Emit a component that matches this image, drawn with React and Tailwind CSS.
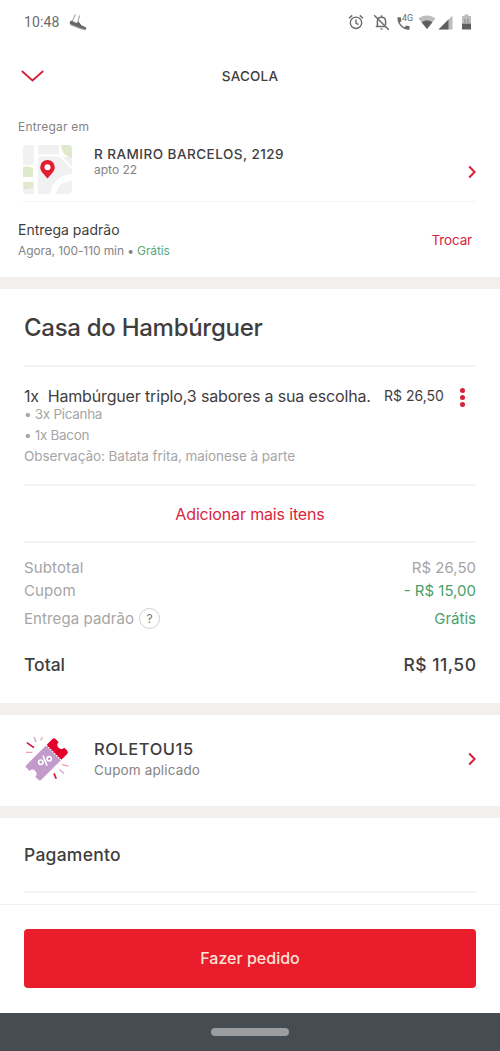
import React from 'react';

const ITEM_DETAILS = ['• 3x Picanha', '• 1x Bacon'];

const StatusBar = () => (
    <div className="flex h-11 items-center justify-between pl-[24px] pr-[28px] text-[#6b6b6b]">
        <div className="flex items-center gap-[10px]">
            <span className="font-[Roboto] text-[14px] leading-4 tracking-[0.1px]">10:48</span>
            <svg width="18" height="18" viewBox="0 0 18 18">
                <path d="M0.6 9.2L2.2 7.4L7.5 10L9.6 8.4L12.4 12.2L17.2 14.6L17 16.6L11.8 15.6L1.2 11.2Z" fill="#666" />
                <path d="M1.2 11.4L11.8 15.8L17 16.8" fill="none" stroke="#999" strokeWidth="1.1" />
                <path d="M3.4 8L6.4 1.2M8.8 9L10.6 2.4" fill="none" stroke="#999" strokeWidth="1" />
            </svg>
        </div>
        <div className="flex items-center">
            <svg width="16" height="16" viewBox="0 0 16 16" fill="none" stroke="currentColor" strokeWidth="1.4">
                <circle cx="8" cy="8.8" r="5.7" />
                <path d="M8 5.6V9.2L10.4 10.7M1 4.2L4.2 1.4M15 4.2L11.8 1.4" />
            </svg>
            <svg className="ml-[9px]" width="17" height="17" viewBox="0 0 17 17" fill="none" stroke="currentColor" strokeWidth="1.5">
                <path d="M4.4 12.2V7.4C4.4 4.8 6 3.2 8.5 3.2S12.6 4.8 12.6 7.4V11M2.8 12.6H12.6M8.5 1.2V3" />
                <path d="M1.2 1.2L15.8 15.8" />
                <path d="M7.2 14.4H9.8A1.3 1.3 0 0 1 7.2 14.4Z" fill="currentColor" stroke="none" />
            </svg>
            <div className="relative ml-[7px] h-[17px] w-[17px]">
                <svg width="17" height="17" viewBox="0 0 17 17" fill="currentColor">
                    <path d="M0.5 3.2H3.8L4.5 7L2.8 8.6C4 11 5.7 12.5 7.6 13.3L9.3 11.5L12.6 12.3V15.6C6 16.2 0 10.6 0.5 3.2Z" />
                </svg>
                <span className="absolute left-[5px] top-0 font-[Roboto] text-[9px] leading-[9px]">4G</span>
            </div>
            <svg className="ml-[4px]" width="18" height="15" viewBox="0 0 18 15">
                <path d="M0.5 3.5C5.5 -0.6 12.5 -0.6 17.5 3.5L9 14Z" fill="#bdbdbd" />
                <path d="M3.6 7.3C6.8 4.9 11.2 4.9 14.4 7.3L9 14Z" fill="#5f5f5f" />
            </svg>
            <svg className="ml-[2px]" width="15" height="15" viewBox="0 0 15 15">
                <path d="M14.5 0.5V14.5H0.5Z" fill="#bdbdbd" />
                <path d="M10.5 4.5V14.5H0.5Z" fill="#5f5f5f" />
            </svg>
            <svg className="ml-[8px]" width="11" height="16" viewBox="0 0 11 16">
                <path d="M3.5 0.5H7.5V2H10V9.5H1V2H3.5Z" fill="#bdbdbd" />
                <path d="M1 9.5H10V15.5H1Z" fill="#5f5f5f" />
                <path d="M4 5V9M7 5V9" stroke="#888" strokeWidth="1" />
            </svg>
        </div>
    </div>
);

const MapThumb = () => (
    <svg width="49" height="49" viewBox="0 0 49 49">
        <g fill="#f1f1f2">
            <path d="M4 0H11V20H0V4Q0 0 4 0Z" />
            <path d="M15 0H36V12H49V29C36 30 29 37 27 49H15V36H15Z" />
            <path d="M33 49C34 41 40 36 49 36V45Q49 49 45 49Z" />
            <path d="M0 37H11V49H4Q0 49 0 45Z" />
        </g>
        <path d="M15 10.5H37L49 23" fill="none" stroke="#fff" strokeWidth="2" />
        <g fill="#e0e9cb">
            <path d="M38 0H45Q49 0 49 4V13C43 12 38 7 38 0Z" />
            <path d="M0 22Q5 20 10 23V32H0Z" />
            <path d="M0 37H10V42Q7 45 1 44Z" />
        </g>
        <path d="M24.5 33.5C21 29 17.2 26.3 17.2 22.2A7.3 7.3 0 0 1 31.8 22.2C31.8 26.3 28 29 24.5 33.5Z" fill="#e11d2e" />
        <circle cx="24.5" cy="22.3" r="3" fill="#fff" />
    </svg>
);

const CouponIcon = () => (
    <svg width="46" height="46" viewBox="0 0 46 46">
        <g transform="translate(23.3 23) rotate(-45)">
            <path d="M-19 -10.5H9V10.5H-19Q-21 10.5 -21 8.5V4A4 4 0 0 0 -21 -4V-8.5Q-21 -10.5 -19 -10.5Z" fill="#c39bcb" />
            <path d="M9 -10.5H17.5Q20 -10.5 20 -8V-4A4 4 0 0 0 20 4V8Q20 10.5 17.5 10.5H9Z" fill="#e4002b" />
            <path d="M9 -10.5V10.5" stroke="#fff" strokeWidth="1.3" strokeDasharray="1.5 1.3" />
        </g>
        <g fill="none" stroke="#fff" strokeWidth="1.6">
            <circle cx="16.8" cy="26.2" r="2.2" />
            <circle cx="25.2" cy="22.8" r="2.2" />
            <path d="M18.9 19.6L23.1 29.6" />
        </g>
        <g fill="none" strokeWidth="1.7">
            <path d="M2.8 6.6L10 11.6M30 37.4L32.2 42.8" stroke="#cf1738" />
            <path d="M10.2 1L12 6.2M35.4 33.6L40 37.4" stroke="#d5b5da" />
            <path d="M18.4 1L16.8 4.4M2 16.4H8.4M38 28.6L44.5 30.2" stroke="#f3a1a5" strokeWidth="1.3" />
        </g>
    </svg>
);

const Chevron = () => (
    <svg width="8" height="14" viewBox="0 0 8 14" fill="none" stroke="#d6213a" strokeWidth="2">
        <path d="M1.2 1.5L6.6 7L1.2 12.5" />
    </svg>
);

const Band = () => <div className="h-3 bg-[#f3efec]" />;

const Line = () => <div className="h-[2px] bg-[#f4f3f3]" />;

const App = () => {
    return (
        <div className="flex h-[1051px] w-[500px] flex-col overflow-hidden bg-white font-[Inter,sans-serif] text-[#3f3e3e]">
            <StatusBar />
            <header className="grid h-16 grid-cols-[1fr_auto_1fr] items-center px-[21px]">
                <svg width="23" height="12" viewBox="0 0 23 12" fill="none" stroke="#d6213a" strokeWidth="1.8">
                    <path d="M0.8 1L11.5 10.5L22.2 1" />
                </svg>
                <h1 className="text-[13.5px] font-medium leading-4 tracking-[0.2px]">SACOLA</h1>
            </header>

            <section className="h-[169px] pl-[18px] pr-6 pt-[11px]">
                <p className="text-[12px] leading-4 tracking-[0.2px] text-[#858484]">Entregar em</p>
                <div className="ml-[5px] mt-[10px] flex h-[57px] border-b border-[#f4f4f4]">
                    <MapThumb />
                    <div className="ml-[22px] flex-1">
                        <p className="mt-px text-[13.5px] font-medium leading-4 tracking-[0.47px]">R RAMIRO BARCELOS, 2129</p>
                        <p className="text-[12px] leading-4 text-[#858484]">apto 22</p>
                    </div>
                    <div className="mt-5"><Chevron /></div>
                </div>
                <div className="mt-[18px] flex items-start justify-between pr-1">
                    <div>
                        <p className="text-[14px] leading-5">Entrega padrão</p>
                        <p className="mt-px text-[12px] leading-5 tracking-[-0.1px] text-[#858484]">
                            Agora, 100-110 min • <span className="text-[#58a87b]">Grátis</span>
                        </p>
                    </div>
                    <button className="mt-[10px] text-[13.5px] leading-5 tracking-[-0.15px] text-[#d92540]">Trocar</button>
                </div>
            </section>
            <Band />

            <section className="h-[414px] px-6 pt-[23px]">
                <h2 className="mb-[21px] text-[24px] font-medium leading-8 tracking-[-0.28px]">Casa do Hambúrguer</h2>
                <Line />
                <div className="flex h-[117px] flex-col pt-[19px]">
                    <div className="flex h-5 items-center">
                        <p className="w-[360px] whitespace-pre text-[16px] leading-5 tracking-[-0.15px]">1x  Hambúrguer triplo,3 sabores a sua escolha.</p>
                        <span className="text-[14px] leading-5">R$ 26,50</span>
                        <div className="ml-auto mr-[11px] mt-[3px] flex flex-col gap-[2px]">
                            <i className="h-[5px] w-[5px] rounded-full bg-[#d6213a]" />
                            <i className="h-[5px] w-[5px] rounded-full bg-[#d6213a]" />
                            <i className="h-[5px] w-[5px] rounded-full bg-[#d6213a]" />
                        </div>
                    </div>
                    <div className="-mt-[2px] text-[13.5px] leading-[21px] tracking-[-0.05px] text-[#a6a5a5]">
                        {ITEM_DETAILS.map(d => <p key={d} className="tracking-[-0.3px]">{d}</p>)}
                        <p>Observação: Batata frita, maionese à parte</p>
                    </div>
                </div>
                <Line />
                <button className="flex h-[55px] w-full items-center justify-center text-[16px] tracking-[-0.15px] text-[#d92540]">Adicionar mais itens</button>
                <Line />
                <div className="mt-[13px] text-[15px] leading-[23px] text-[#a6a5a5]">
                    <div className="flex justify-between"><span className="tracking-[0.12px]">Subtotal</span><span>R$ 26,50</span></div>
                    <div className="flex justify-between"><span className="tracking-[0.12px]">Cupom</span><span className="text-[#489f6b]">- R$ 15,00</span></div>
                    <div className="mt-[5px] flex justify-between">
                        <div className="flex items-center gap-[5px]">
                            <span className="tracking-[0.1px]">Entrega padrão</span>
                            <span className="flex h-[21px] w-[21px] items-center justify-center rounded-full border border-[#cfcfcf] text-[12px] leading-none text-[#777]">?</span>
                        </div>
                        <span className="text-[#489f6b]">Grátis</span>
                    </div>
                </div>
                <div className="mt-[23px] flex justify-between text-[17.5px] font-medium leading-6">
                    <span>Total</span>
                    <span className="tracking-[0.5px] -mr-[0.5px]">R$ 11,50</span>
                </div>
            </section>
            <Band />

            <section className="flex h-[91px] items-center px-6 pb-1">
                <CouponIcon />
                <div className="ml-[24px] flex-1">
                    <p className="text-[16.5px] font-medium leading-[22px] tracking-[0.55px]">ROLETOU15</p>
                    <p className="text-[13.5px] leading-5 tracking-[0.15px] text-[#858484]">Cupom aplicado</p>
                </div>
                <Chevron />
            </section>
            <Band />

            <section className="h-[86px] px-6 pt-[25px]">
                <h3 className="mb-[24px] text-[17.5px] font-medium leading-6 tracking-[0.25px]">Pagamento</h3>
                <Line />
            </section>

            <footer className="h-[109px] border-t border-[#efefef] px-6 pt-6">
                <button className="h-[59px] w-full rounded-[4px] bg-[#ea1d2c] pb-[2px] text-[16px] font-medium text-[#fbe3d8]">Fazer pedido</button>
            </footer>
            <div className="flex h-[38px] items-center justify-center bg-[#454d52]">
                <div className="h-[8px] w-[78px] rounded-full bg-[#9a9ea0]" />
            </div>
        </div>
    );
};

export default App;
